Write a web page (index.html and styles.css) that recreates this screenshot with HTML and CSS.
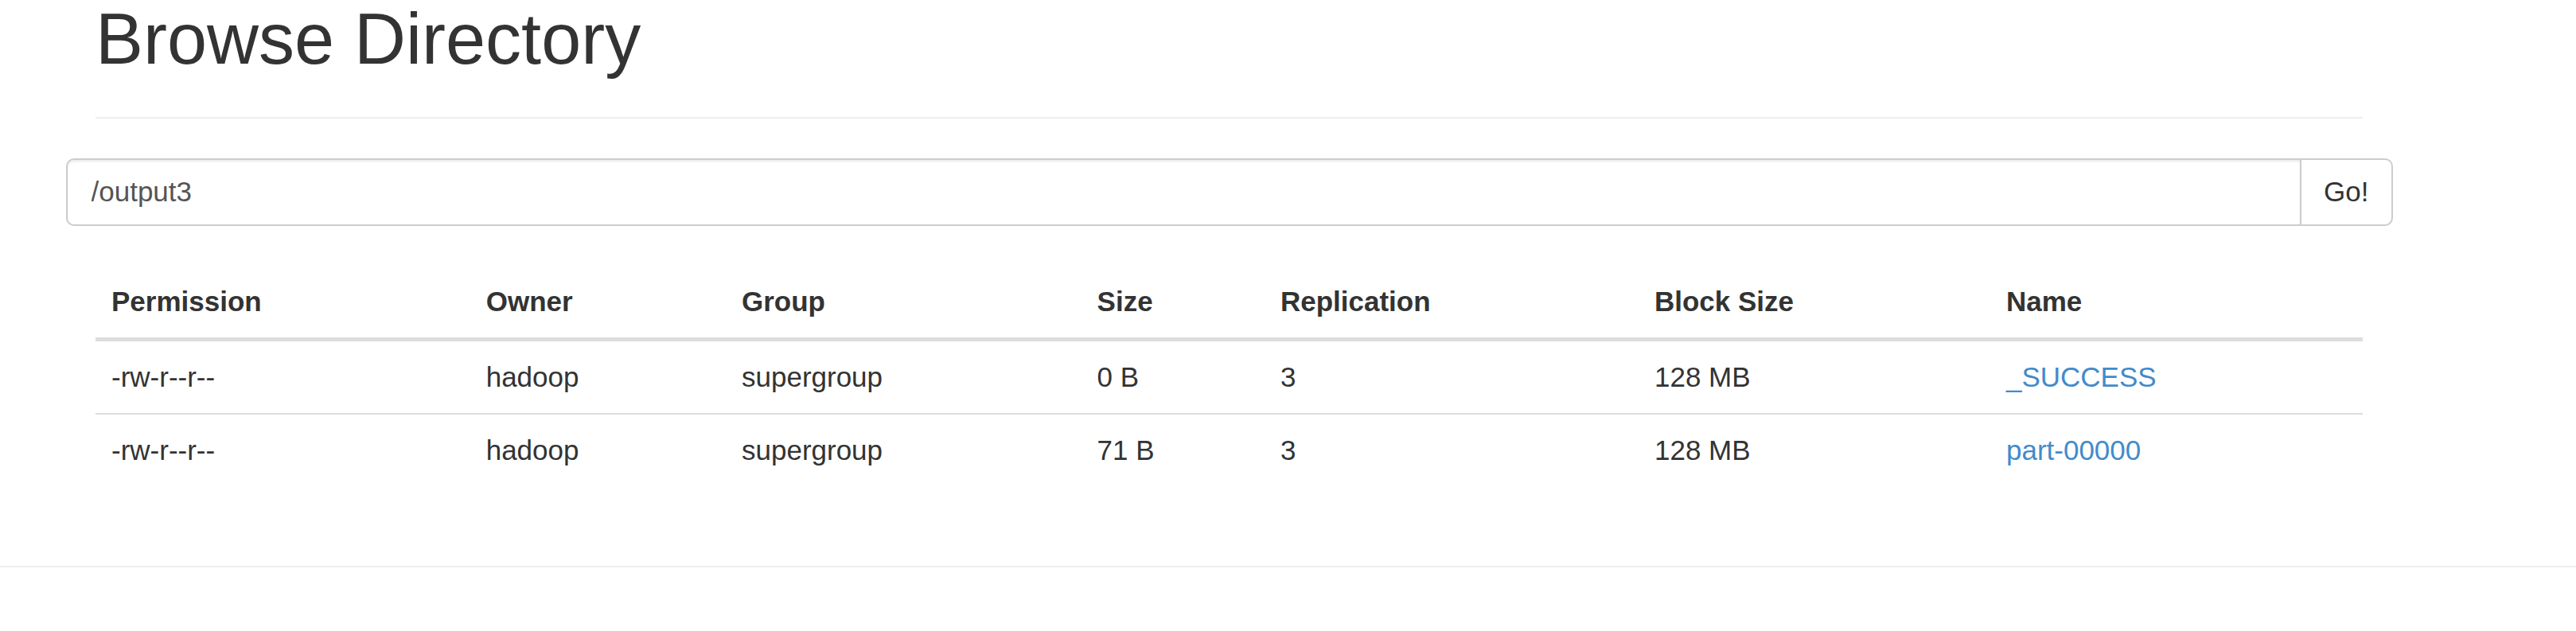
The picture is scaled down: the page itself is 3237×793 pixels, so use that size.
FILE: index.html
```html
<!DOCTYPE html>
<html lang="en">
<head>
<meta charset="utf-8">
<title>Browse Directory</title>
<link rel="stylesheet" href="styles.css">
</head>
<body>
<div class="container">
  <div class="page-header">
    <h1>Browse Directory</h1>
  </div>
  <div class="row">
    <form class="input-group">
      <input class="form-control" type="text" value="/output3">
      <button class="btn" type="button">Go!</button>
    </form>
  </div>
  <table class="table">
    <colgroup>
      <col class="c-perm"><col class="c-owner"><col class="c-group"><col class="c-size"><col class="c-repl"><col class="c-block"><col class="c-name">
    </colgroup>
    <thead>
      <tr>
        <th>Permission</th><th>Owner</th><th>Group</th><th>Size</th><th>Replication</th><th>Block Size</th><th>Name</th>
      </tr>
    </thead>
    <tbody>
      <tr>
        <td>-rw-r--r--</td><td>hadoop</td><td>supergroup</td><td>0 B</td><td>3</td><td>128 MB</td><td><a href="#">_SUCCESS</a></td>
      </tr>
      <tr>
        <td>-rw-r--r--</td><td>hadoop</td><td>supergroup</td><td>71 B</td><td>3</td><td>128 MB</td><td><a href="#">part-00000</a></td>
      </tr>
    </tbody>
  </table>
</div>
<hr class="footer-rule">
</body>
</html>
```
FILE: styles.css
```css
* { box-sizing: border-box; }
html, body { margin: 0; padding: 0; background: #fff; }
body {
  font-family: "Liberation Sans", Arial, Helvetica, sans-serif;
  font-size: 35px;
  line-height: 50px;
  color: #333;
}
.container {
  margin-left: 82.5px;
  width: 2924px;
  padding: 0 37.5px;
}
.page-header {
  padding-bottom: 22.5px;
  margin: 0 0 50px;
  border-bottom: 2.5px solid #eee;
}
.page-header h1 {
  margin: 0 0 25px;
  font-size: 90px;
  line-height: 99px;
  font-weight: normal;
  color: #333;
}
.row {
  margin: 0 -37.5px;
}
.input-group {
  display: flex;
  margin: 0;
}
.form-control {
  flex: 1 1 auto;
  min-width: 0;
  height: 85px;
  padding: 15px 30px;
  font-family: inherit;
  font-size: 35px;
  line-height: 50px;
  color: #555;
  background: #fff;
  border: 2.5px solid #ccc;
  border-right: 0;
  border-radius: 10px 0 0 10px;
  box-shadow: inset 0 2.5px 2.5px rgba(0,0,0,.075);
  outline: none;
}
.btn {
  flex: 0 0 auto;
  height: 85px;
  padding: 15px 28px;
  font-family: inherit;
  font-size: 35px;
  line-height: 50px;
  color: #333;
  background: #fff;
  border: 2.5px solid #ccc;
  border-radius: 0 10px 10px 0;
  cursor: pointer;
}
.table {
  width: 100%;
  margin: 50px 0 50px;
  border-collapse: collapse;
  border-spacing: 0;
  table-layout: fixed;
}
.c-perm { width: 470.7px; }
.c-owner { width: 321.3px; }
.c-group { width: 446.6px; }
.c-size { width: 230.4px; }
.c-repl { width: 470px; }
.c-block { width: 442px; }
.c-name { width: auto; }
.table th, .table td {
  padding: 20px;
  text-align: left;
  vertical-align: top;
  line-height: 50px;
}
.table th {
  font-weight: bold;
  border-bottom: 5px solid #ddd;
}
.table td {
  border-top: 2.5px solid #ddd;
}
.table tbody tr:first-child td { border-top: 0; }
.table a {
  color: #428bca;
  text-decoration: none;
}
.footer-rule {
  margin: 100px 0 0;
  border: 0;
  height: 2.5px;
  background: #eee;
}
```
